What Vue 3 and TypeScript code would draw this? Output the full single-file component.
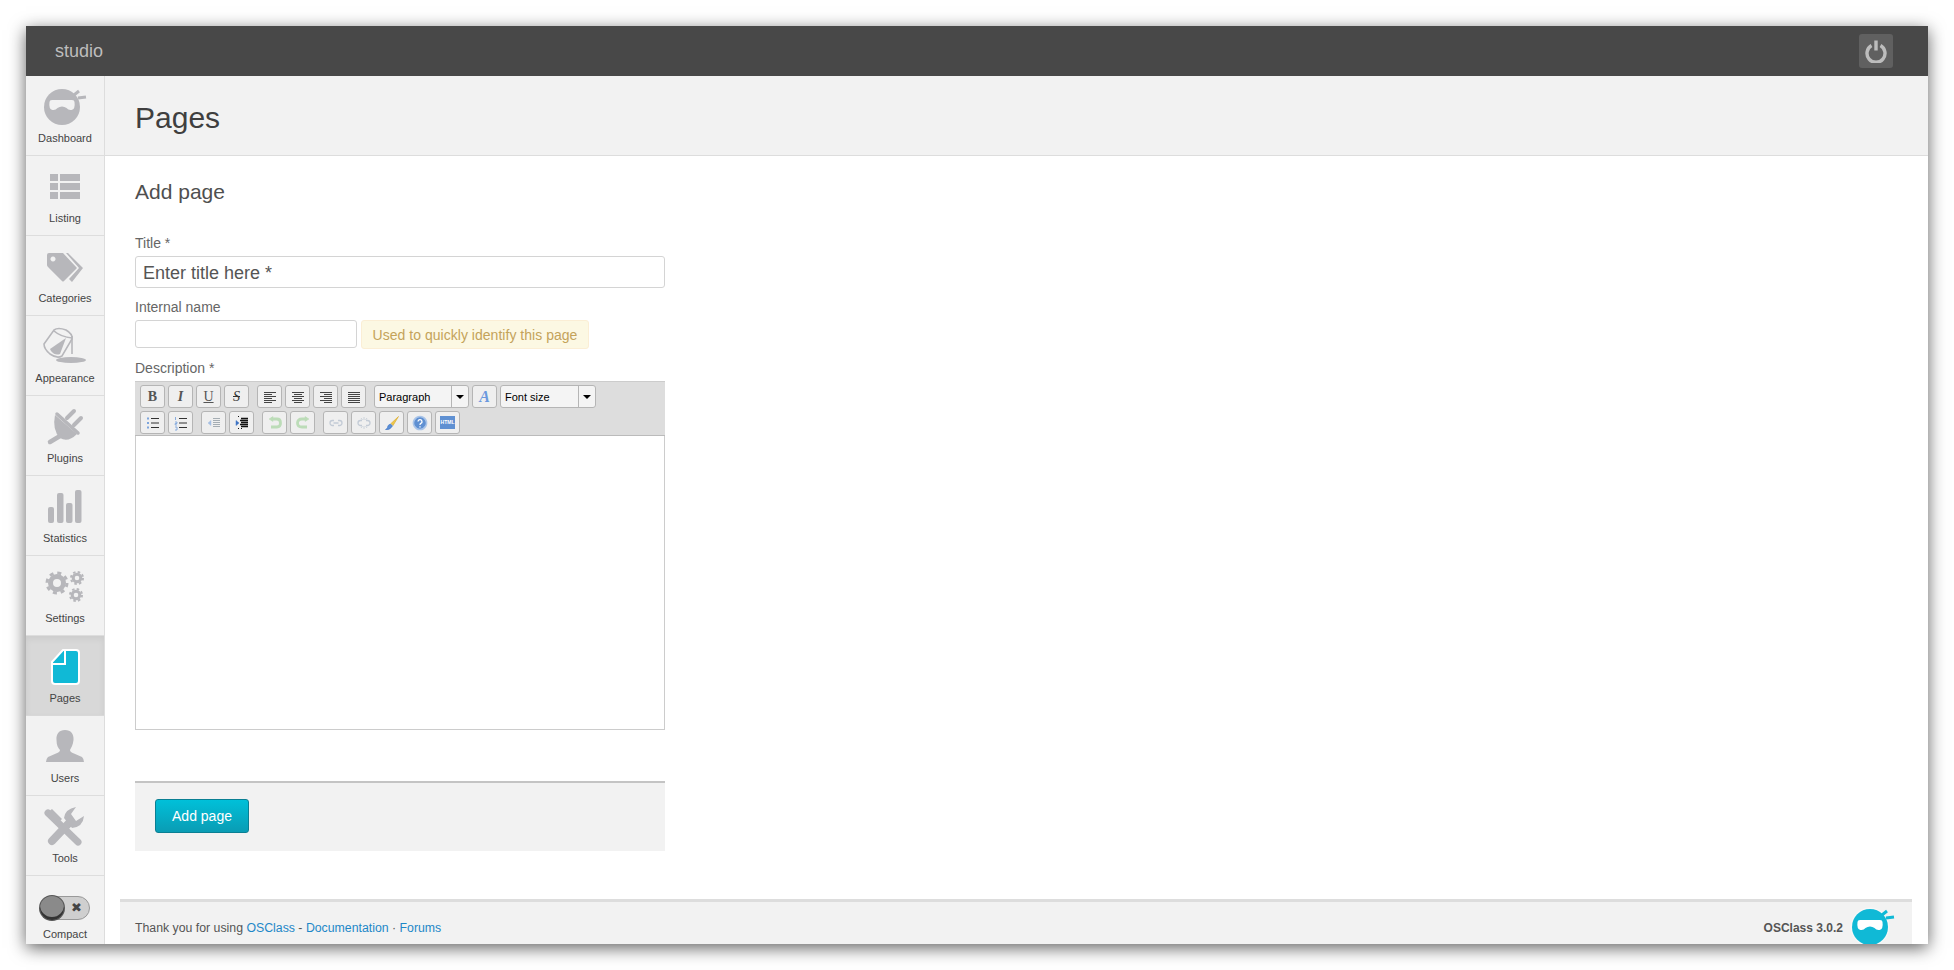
<script setup lang="ts">
interface Stroke { d: string; c?: string; w?: number; f?: string }
interface Btn { id: string; text?: string; cls?: string; sep?: boolean; dim?: boolean; strokes?: Stroke[] }

const lines = (rows: [number, number][], c = '#444'): Stroke[] =>
  rows.map(([a, b], i) => ({ d: `M${a} ${3.5 + i * 2}H${b}`, c, w: 1 }))

const row1: Btn[] = [
  { id: 'b', text: 'B', cls: 'tb-bold' },
  { id: 'i', text: 'I', cls: 'tb-italic' },
  { id: 'u', text: 'U', cls: 'tb-under' },
  { id: 's', text: 'S', cls: 'tb-strike' },
  { id: 'al', sep: true, strokes: lines([[2, 14], [2, 10], [2, 14], [2, 10], [2, 14], [2, 10]]) },
  { id: 'ac', strokes: lines([[2, 14], [4, 12], [2, 14], [4, 12], [2, 14], [4, 12]]) },
  { id: 'ar', strokes: lines([[2, 14], [6, 14], [2, 14], [6, 14], [2, 14], [6, 14]]) },
  { id: 'aj', strokes: lines([[2, 14], [2, 14], [2, 14], [2, 14], [2, 14], [2, 14]]) }
]

const row2a: Btn[] = [
  { id: 'ul', strokes: [
    { d: 'M6 3.5H14M6 8H14M6 12.5H14', c: '#333', w: 1 },
    { d: 'M2 3.5h2M2 8h2M2 12.5h2', c: '#7da5dd', w: 2.2 }
  ] },
  { id: 'ol', strokes: [
    { d: 'M6 3.5H14M6 8H14M6 12.5H14', c: '#333', w: 1 },
    { d: 'M2.5 2v3M2 7h2v1.5H2.2V10H4M2 12h2v3H2', c: '#7da5dd', w: 0.9 }
  ] },
  { id: 'out', sep: true, strokes: [
    { d: 'M7 3.5H14M7 5.5H14M7 7.5H14M7 9.5H14M7 11.5H14', c: '#a5adb3', w: 1 },
    { d: 'M5 5.5L2 8L5 10.5Z', c: '#a5bfe3', f: '#a5bfe3', w: 0.5 }
  ] },
  { id: 'in', strokes: [
    { d: 'M7 3.5H14M6 5.5H14M7 7.5H14M6 9.5H14M7 11.5H14', c: '#111', w: 1.4 },
    { d: 'M2 5.5L5 8L2 10.5Z', c: '#3f74c4', f: '#3f74c4', w: 0.5 },
    { d: 'M4 1.500h1M7 13.500h1M4 13.500h1', c: '#111', w: 1 }
  ] },
  { id: 'undo', sep: true, strokes: [
    { d: 'M4 4H10Q13.500 4 13.500 8T10 12H4', c: '#bcdcb8', w: 2.8 },
    { d: 'M6 1.500L2 4L6 6.500Z', c: '#bcdcb8', f: '#bcdcb8', w: 0.5 }
  ] },
  { id: 'redo', strokes: [
    { d: 'M12 4H7Q2.500 4 2.500 8T7 12H12', c: '#bcdcb8', w: 2.8 },
    { d: 'M10 1.500L14 4L10 6.500Z', c: '#bcdcb8', f: '#bcdcb8', w: 0.5 }
  ] },
  { id: 'link', sep: true, strokes: [
    { d: 'M6 5.500H4.500a2.500 2.500 0 0 0 0 5H6M10 5.500h1.500a2.500 2.500 0 0 1 0 5H10M5.500 8h5', c: '#c3cbd6', w: 1.3 }
  ] },
  { id: 'unlink', strokes: [
    { d: 'M6 5.500H4.500a2.500 2.500 0 0 0 0 5H6M10 5.500h1.500a2.500 2.500 0 0 1 0 5H10', c: '#c3cbd6', w: 1.3 },
    { d: 'M8 2v3M8 11v3M5 3l1.500 2M11 3l-1.500 2M5 13l1.500-2M11 13l-1.500-2', c: '#c3cbd6', w: 0.8 }
  ] },
  { id: 'brush', strokes: [
    { d: 'M14.500 1.500L7 8.500L9 10.500Z', c: '#d9a420', f: '#eec94d', w: 0.6 },
    { d: 'M6.500 9Q3.500 10 3.500 12.500Q3 14 1.500 14.500Q6 15.500 8.500 11Z', c: '#3f74c4', f: '#5b8fd6', w: 0.6 }
  ] },
  { id: 'help', strokes: [
    { d: 'M8 1.500a6.500 6.500 0 1 0 0.010 0Z', c: '#a9c4e8', f: '#5f90d2', w: 1.6 },
    { d: 'M6 6.500a2 2 0 1 1 2.800 1.900Q8 8.800 8 10M8 11.300v1.300', c: '#fff', w: 1.300 }
  ] }
]

interface NavItem { label: string; active?: boolean }
const nav: NavItem[] = ['Dashboard', 'Listing', 'Categories', 'Appearance', 'Plugins', 'Statistics', 'Settings']
  .map((label) => ({ label }))
const navAfter: NavItem[] = ['Users', 'Tools'].map((label) => ({ label }))
const maskPath = 'M8.500 18q0-2 2.500-2h20q2.500 0 2.500 2q1 7-3 8q-3 .5-5-2q-2-1.500-4.500-1.500t-4.500 1.500q-2 2.500-5 2q-4-1-3-8Z'
</script>

<template>
  <div class="page">
    <div class="window">
      <header class="topbar">
        <span class="brand">studio</span>
        <button class="power" type="button" aria-label="Log out">
          <svg width="24" height="24" viewBox="0 0 24 24" fill="none" stroke="#bdbdbd" stroke-width="3.400">
            <path d="M7.500 6.500a9 9 0 1 0 9 0" />
            <path d="M12 1.500v10" />
          </svg>
        </button>
      </header>
      <div class="body">
        <nav class="sidebar">
          <a v-for="item in nav" :key="item.label" class="nav-item">
            <svg class="nav-icon" width="48" height="48" viewBox="0 0 48 48">
              <g v-if="item.label === 'Dashboard'" fill="#b7b7bb">
                <circle cx="21" cy="23" r="18" />
                <path :d="maskPath" fill="#f2f2f2" />
                <path d="M33 11l5-4M37 14l8-1" stroke="#b7b7bb" stroke-width="3" />
              </g>
              <g v-else-if="item.label === 'Listing'" fill="#b7b7bb">
                <rect x="9" y="10" width="8" height="7" /><rect x="19" y="10" width="20" height="7" />
                <rect x="9" y="19" width="8" height="7" /><rect x="19" y="19" width="20" height="7" />
                <rect x="9" y="28" width="8" height="7" /><rect x="19" y="28" width="20" height="7" />
              </g>
              <g v-else-if="item.label === 'Categories'" fill="#b7b7bb">
                <path fill-rule="evenodd" d="M8 9H22L36 24L23 37Q22 38 21 37L7 23Q6 22 6 21V11Q6 9 8 9ZM12 12.500a2.500 2.500 0 1 0 .01 0Z" />
                <path d="M25 9H27L42 24L31 38L28 35L38 24Z" />
              </g>
              <g v-else-if="item.label === 'Appearance'">
                <ellipse cx="30" cy="36" rx="15" ry="3" fill="#b7b7bb" />
                <path d="M3 20L13 6Q17 3 25 6Q32 10 31 15L21 32Q16 35 9 30Q3 25 3 20Z" fill="#f2f2f2" stroke="#b7b7bb" stroke-width="1.600" />
                <path d="M9 25L25 14L19 30Q14 32 10 27Z" fill="#b7b7bb" />
                <path d="M13 7Q20 13 31 14M31 12V30" fill="none" stroke="#b7b7bb" stroke-width="1.600" />
              </g>
              <g v-else-if="item.label === 'Plugins'" fill="#b7b7bb" stroke="#b7b7bb" stroke-linecap="round">
                <path d="M16 10L37 29" stroke-width="3.500" />
                <path d="M26 14L33 7M33 21L40 14" stroke-width="4" />
                <path d="M14 11L36 30Q27 39 19 34Q11 26 14 11Z" stroke="none" />
                <path d="M19 32L9 38" stroke-width="4.500" />
              </g>
              <g v-else-if="item.label === 'Statistics'" fill="#b7b7bb">
                <rect x="7" y="23" width="6" height="16" rx="2" /><rect x="16" y="9" width="6.500" height="30" rx="2" />
                <rect x="25" y="19" width="6.500" height="20" rx="2" /><rect x="34" y="6" width="6.500" height="33" rx="2" />
              </g>
              <g v-else fill="none" stroke="#b7b7bb">
                <circle cx="16" cy="19" r="6.500" stroke-width="5" />
                <circle cx="16" cy="19" r="10" stroke-width="3" stroke-dasharray="4 3.850" />
                <circle cx="36" cy="14" r="3.800" stroke-width="3" />
                <circle cx="36" cy="14" r="6" stroke-width="2" stroke-dasharray="2.500 2.210" />
                <circle cx="35" cy="31" r="3.800" stroke-width="3" />
                <circle cx="35" cy="31" r="6" stroke-width="2" stroke-dasharray="2.500 2.210" />
              </g>
            </svg>
            <span class="nav-label">{{ item.label }}</span>
          </a>
          <a class="nav-item active">
            <svg class="nav-icon" width="48" height="48" viewBox="0 0 48 48">
              <path d="M22 6H35Q38 6 38 9V37Q38 40 35 40H14Q11 40 11 37V18Z" fill="#10b9d6" stroke="#fff" stroke-width="2" stroke-linejoin="round" />
              <path d="M11 20H24V6" fill="none" stroke="#fff" stroke-width="2" />
            </svg>
            <span class="nav-label">Pages</span>
          </a>
          <a v-for="item in navAfter" :key="item.label" class="nav-item">
            <svg class="nav-icon" width="48" height="48" viewBox="0 0 48 48">
              <g v-if="item.label === 'Users'" fill="#b7b7bb">
                <path d="M24 6C30 6 33 10 32.500 16C32 21 30 24 29 26Q29 28 33 29.500L41 33Q43 35 43 38H5Q5 35 7 33L15 29.500Q19 28 19 26C17 24 15.500 21 15.500 16C15 10 18 6 24 6Z" />
              </g>
              <g v-else fill="#b7b7bb">
                <path d="M7 9L37 38" stroke="#b7b7bb" stroke-width="7" stroke-linecap="round" />
                <path d="M11 37L29 18" stroke="#b7b7bb" stroke-width="8" stroke-linecap="round" />
                <path d="M23 14Q24 5 35 3L30 10L35 17L43 12Q42 23 31 24Z" />
                <path d="M7 8L11 5L21 15L17 19Z" />
              </g>
            </svg>
            <span class="nav-label">{{ item.label }}</span>
          </a>
          <a class="nav-item compact">
            <span class="toggle">
              <span class="knob"></span>
              <span class="toggle-x">✖</span>
            </span>
            <span class="nav-label">Compact</span>
          </a>
        </nav>
        <main class="main">
          <div class="page-head"><h1>Pages</h1></div>
          <section class="content">
            <h2>Add page</h2>
            <form class="form" @submit.prevent>
              <label class="lbl first">Title *</label>
              <input class="title-input" type="text" placeholder="Enter title here *" />
              <label class="lbl internal">Internal name</label>
              <div class="internal-row">
                <input class="internal-input" type="text" />
                <span class="hint">Used to quickly identify this page</span>
              </div>
              <label class="lbl desc">Description *</label>
              <div class="editor">
                <div class="toolbar">
                  <div class="tb-row">
                    <span v-for="b in row1" :key="b.id" class="tb-btn" :class="{ sep: b.sep }">
                      <span v-if="b.text" :class="b.cls">{{ b.text }}</span>
                      <svg v-else width="16" height="16" viewBox="0 0 16 16" fill="none">
                        <path v-for="(s, i) in b.strokes" :key="i" :d="s.d" :stroke="s.c" :stroke-width="s.w" :fill="s.f || 'none'" />
                      </svg>
                    </span>
                    <span class="tb-select sep para"><span class="sel-text">Paragraph</span><span class="sel-arrow"></span></span>
                    <span class="tb-btn"><span class="tb-color">A</span></span>
                    <span class="tb-select size"><span class="sel-text">Font size</span><span class="sel-arrow"></span></span>
                  </div>
                  <div class="tb-row">
                    <span v-for="b in row2a" :key="b.id" class="tb-btn" :class="{ sep: b.sep }">
                      <svg width="16" height="16" viewBox="0 0 16 16" fill="none">
                        <path v-for="(s, i) in b.strokes" :key="i" :d="s.d" :stroke="s.c" :stroke-width="s.w" :fill="s.f || 'none'" />
                      </svg>
                    </span>
                    <span class="tb-btn"><span class="html-ico">HTML</span></span>
                  </div>
                </div>
                <div class="editor-area"></div>
              </div>
              <div class="actions">
                <button class="submit" type="submit">Add page</button>
              </div>
            </form>
          </section>
          <footer class="footer">
            <span class="thanks">Thank you for using <a>OSClass</a> - <a>Documentation</a> · <a>Forums</a></span>
            <span class="foot-right">
              <span class="version">OSClass 3.0.2</span>
              <svg class="foot-logo" width="48" height="48" viewBox="0 0 48 48">
                <circle cx="21" cy="23" r="19.500" fill="#f7f7f7" />
                <circle cx="21" cy="23" r="18" fill="#10b9d6" />
                <path :d="maskPath" fill="#fff" />
                <path d="M33 11l5-4M37 14l8-1" stroke="#10b9d6" stroke-width="3" />
              </svg>
            </span>
          </footer>
        </main>
      </div>
    </div>
  </div>
</template>

<style>
html, body { margin: 0; background: #fff; overflow: hidden; }
</style>

<style scoped>
.page { height: 970px; box-sizing: border-box; padding: 26px; background: #fff; font-family: "Liberation Sans", Arial, sans-serif; }
.window { height: 918px; display: flex; flex-direction: column; background: #fff; box-shadow: 0 4px 16px rgba(0, 0, 0, 0.62); overflow: hidden; }
.topbar { height: 50px; flex: none; background: #484848; display: flex; align-items: center; justify-content: space-between; padding: 0 35px 0 29px; }
.brand { font-size: 18px; color: #bdbdbd; }
.power { width: 34px; height: 34px; padding: 0; border: 0; border-radius: 3px; background: #606060; display: flex; align-items: center; justify-content: center; }
.body { flex: 1; display: flex; min-height: 0; }
.sidebar { width: 78px; flex: none; background: #f2f2f2; border-right: 1px solid #ddd; overflow: hidden; }
.nav-item { box-sizing: border-box; height: 80px; display: flex; flex-direction: column; align-items: center; padding-top: 8px; border-bottom: 1px solid #ddd; }
.nav-item:last-child { border-bottom: 0; }
.nav-item.active { background: #d8d8d8; box-shadow: inset 0 3px 6px rgba(0, 0, 0, 0.06); border-bottom-color: #d8d8d8; }
.nav-icon { flex: none; display: block; }
.nav-label { margin-top: -1px; font-size: 11px; line-height: 14px; color: #444; }
.compact { padding-top: 20px; }
.toggle { box-sizing: border-box; width: 50px; height: 24px; display: flex; align-items: center; justify-content: space-between; border: 1px solid #999; border-radius: 12px; background: #cfcfcf; padding-right: 7px; }
.knob { width: 24px; height: 24px; margin-left: -1px; border-radius: 50%; background: #8a8a8a; box-shadow: inset 0 -3px 0 #333, 0 0 0 1px #555; }
.toggle-x { font-size: 13px; line-height: 14px; color: #444; }
.compact .nav-label { margin-top: 7px; }
.main { flex: 1; min-width: 0; display: flex; flex-direction: column; }
.page-head { box-sizing: border-box; height: 80px; flex: none; background: #f2f2f2; border-bottom: 1px solid #ddd; padding: 4px 0 0 30px; display: flex; align-items: center; }
h1 { margin: 0; font-size: 30px; font-weight: 400; color: #3f3f3f; }
.content { flex: 1; padding: 21px 0 0 30px; min-height: 0; }
h2 { margin: 0; font-size: 21px; line-height: 28px; padding-top: 1px; margin-bottom: -1px; font-weight: 400; color: #4f4f4f; }
.form { width: 530px; display: flex; flex-direction: column; }
.lbl { font-size: 14px; line-height: 16px; color: #666; }
.first { margin-top: 30px; }
.title-input { box-sizing: border-box; height: 32px; margin-top: 5px; padding: 3px 7px 0; width: 100%; border: 1px solid #d4d4d4; border-radius: 3px; font: 18px "Liberation Sans", Arial, sans-serif; color: #555; outline: 0; }
.title-input::placeholder { color: #555; opacity: 1; }
.internal { margin-top: 11px; }
.internal-row { display: flex; align-items: flex-start; gap: 4px; margin-top: 5px; height: 29px; }
.internal-input { box-sizing: border-box; width: 222px; height: 28px; border: 1px solid #d4d4d4; border-radius: 3px; outline: 0; }
.hint { box-sizing: border-box; height: 29px; width: 228px; display: flex; align-items: center; justify-content: center; background: #fcf8e3; border: 1px solid #fbeed5; border-radius: 3px; font-size: 14px; letter-spacing: 0.03px; color: #c4a35a; }
.desc { margin-top: 11px; }
.editor { box-sizing: border-box; margin-top: 5px; height: 349px; display: flex; flex-direction: column; border: 1px solid #ccc; border-top: 0; }
.toolbar { height: 55px; flex: none; box-sizing: border-box; background: #ddd; border-top: 1px solid #ccc; border-bottom: 1px solid #bbb; margin: 0 -1px; padding: 3px 5px 0; display: flex; flex-direction: column; gap: 3px; }
.tb-row { display: flex; gap: 3px; height: 23px; }
.tb-btn { box-sizing: border-box; width: 25px; height: 23px; display: flex; align-items: center; justify-content: center; background: #efefef; border: 1px solid #b5b5b5; border-radius: 3px; }
.tb-btn.sep, .tb-select.sep { margin-left: 5px; }
.tb-bold { font: bold 14px "Liberation Serif", serif; color: #555; }
.tb-italic { font: italic bold 14px "Liberation Serif", serif; color: #555; }
.tb-under { font: 14px "Liberation Serif", serif; color: #555; text-decoration: underline; }
.tb-strike { font: italic 14px "Liberation Serif", serif; color: #333; text-decoration: line-through; }
.tb-color { font: italic bold 16px "Liberation Serif", serif; color: #6a98de; }
.tb-select { box-sizing: border-box; height: 23px; display: flex; background: #f4f4f4; border: 1px solid #b5b5b5; border-radius: 3px; }
.para { width: 95px; }
.size { width: 96px; }
.sel-text { flex: 1; font-size: 11px; line-height: 22px; padding-left: 4px; color: #000; }
.sel-arrow { width: 16px; position: relative; border-left: 1px solid #b5b5b5; display: flex; align-items: center; justify-content: center; }
.sel-arrow::after { content: ""; border: 4px solid transparent; border-top: 4px solid #000; border-bottom: 0; }
.html-ico { width: 15px; height: 13px; background: #5f90d2; color: #fff; font-size: 5px; font-weight: bold; line-height: 13px; text-align: center; overflow: hidden; }
.editor-area { flex: 1; background: #fff; }
.actions { box-sizing: border-box; height: 70px; margin-top: 51px; padding: 16px 20px 0; background: #f2f2f2; border-top: 2px solid #c4c4c4; }
.submit { box-sizing: border-box; width: 94px; height: 34px; padding: 0; border: 1px solid #0a7f93; border-radius: 3px; background: linear-gradient(#00c0d9, #0a9cb4); color: #fff; font: 14px "Liberation Sans", Arial, sans-serif; }
.footer { box-sizing: border-box; height: 45px; flex: none; margin: 0 16px 0 15px; padding: 14px 0 0 15px; background: #f2f2f2; border-top: 3px solid #ddd; display: flex; justify-content: space-between; overflow: hidden; font-size: 12px; color: #555; }
.thanks { line-height: 24px; font-size: 12.3px; }
.thanks a { color: #1e88c8; }
.foot-right { display: flex; align-items: flex-start; height: 48px; margin-top: -12px; margin-right: 15px; }
.version { font-weight: bold; line-height: 24px; margin-top: 12px; margin-right: 6px; color: #555; }
.foot-logo { display: block; flex: none; }
</style>
